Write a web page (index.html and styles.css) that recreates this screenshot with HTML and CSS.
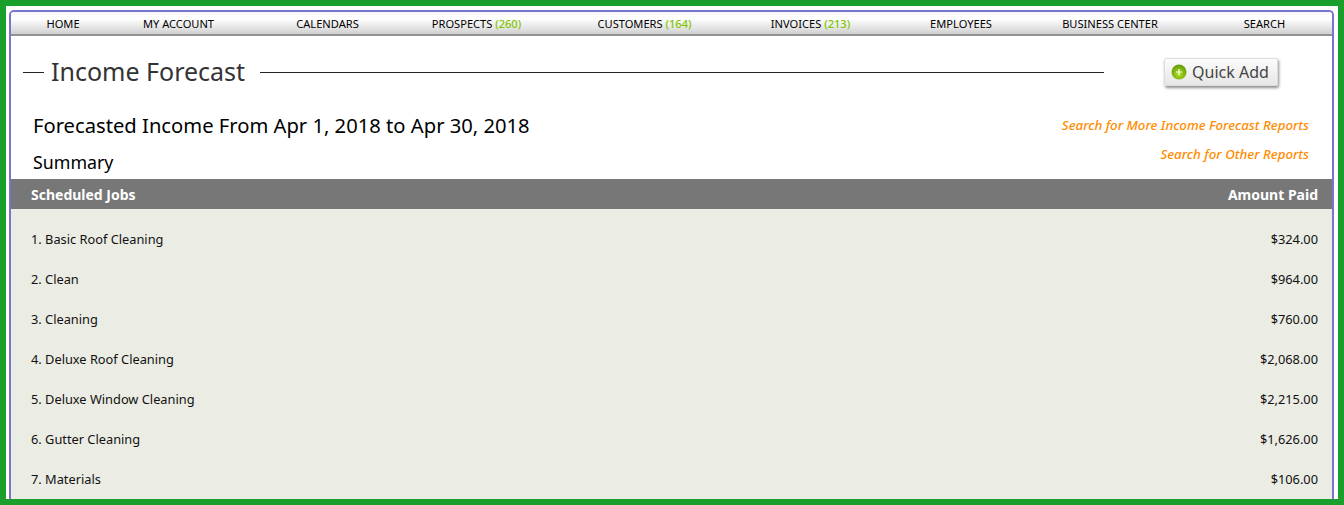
FILE: index.html
```html
<!DOCTYPE html>
<html>
<head>
    <title>Income Forecast</title>
    <link rel="stylesheet" href="styles.css">
</head>
<body>
    <div class="frame">
        <div class="panel">
            <div class="nav">
                <a href="#">HOME</a>
                <a href="#">MY ACCOUNT</a>
                <a href="#">CALENDARS</a>
                <a href="#">PROSPECTS <span class="count">(260)</span></a>
                <a href="#">CUSTOMERS <span class="count">(164)</span></a>
                <a href="#">INVOICES <span class="count">(213)</span></a>
                <a href="#">EMPLOYEES</a>
                <a href="#">BUSINESS CENTER</a>
                <a href="#">SEARCH</a>
            </div>

            <div class="title-row">
                <span class="rule-short"></span>
                <h1>Income Forecast</h1>
                <span class="rule-long"></span>
                <button type="button" class="quick-add">
                    <svg class="plus" width="16" height="16" viewBox="0 0 16 16">
                        <defs>
                            <radialGradient id="plusFill" cx="50%" cy="65%" r="60%">
                                <stop offset="0" stop-color="#b4e020"/>
                                <stop offset="1" stop-color="#659f0a"/>
                            </radialGradient>
                        </defs>
                        <circle cx="8" cy="8" r="7.5" fill="url(#plusFill)"/>
                        <path d="M8 5v6M5 8h6" stroke="#fff" stroke-width="1.2"/>
                    </svg>
                    Quick Add
                </button>
            </div>

            <div class="report-head">
                <div class="report-titles">
                    <h2>Forecasted Income From Apr 1, 2018 to Apr 30, 2018</h2>
                    <h3>Summary</h3>
                </div>
                <div class="report-links">
                    <a href="#">Search for More Income Forecast Reports</a>
                    <a href="#">Search for Other Reports</a>
                </div>
            </div>

            <div class="table-head">
                <span>Scheduled Jobs</span>
                <span>Amount Paid</span>
            </div>
            <div class="table-body">
                <div class="row"><span>1. Basic Roof Cleaning</span><span>$324.00</span></div>
                <div class="row"><span>2. Clean</span><span>$964.00</span></div>
                <div class="row"><span>3. Cleaning</span><span>$760.00</span></div>
                <div class="row"><span>4. Deluxe Roof Cleaning</span><span>$2,068.00</span></div>
                <div class="row"><span>5. Deluxe Window Cleaning</span><span>$2,215.00</span></div>
                <div class="row"><span>6. Gutter Cleaning</span><span>$1,626.00</span></div>
                <div class="row"><span>7. Materials</span><span>$106.00</span></div>
            </div>
        </div>
    </div>
</body>
</html>
```

FILE: styles.css
```css
html, body {
    margin: 0;
    height: 100%;
    overflow: hidden;
}
body {
    font-family: "Noto Sans", Arial, sans-serif;
    color: #111;
    background-color: #fff;
}
.frame {
    box-sizing: border-box;
    height: 505px;
    border: 6px solid #1a9e2c;
    padding: 4px 4px 0 3px;
    overflow: hidden;
}
.panel {
    box-sizing: border-box;
    height: 100%;
    border: 2px solid #7676ce;
    border-bottom: 0;
    border-radius: 5px 5px 0 0;
    overflow: hidden;
}
.nav {
    display: grid;
    grid-template-columns: 44px 187px 111px 187px 149px 183px 118px 180px 129px;
    box-sizing: border-box;
    padding: 1px 0 0 30px;
    height: 24px;
    align-items: center;
    background: linear-gradient(#f8f8f8, #fff 30%, #e2e2e2 75%, #cfcfcf);
    border-bottom: 2px solid #929292;
    white-space: nowrap;
}
.nav a {
    justify-self: center;
    font-size: 11.1px;
    color: #000;
    text-decoration: none;
}
.count {
    font-weight: 500;
    color: #7fc400;
}
.title-row {
    display: flex;
    align-items: center;
    height: 73px;
    padding-left: 12px;
}
.rule-short {
    width: 21px;
    height: 1px;
    background-color: #222;
}
h1 {
    margin: 0 15px 4px 7px;
    font-size: 25px;
    font-weight: normal;
    color: #333;
    white-space: nowrap;
}
.rule-long {
    width: 844px;
    height: 1px;
    background-color: #222;
}
.quick-add {
    display: flex;
    align-items: center;
    gap: 5px;
    box-sizing: border-box;
    width: 114px;
    height: 28px;
    margin: 0 0 2px 60px;
    padding: 0 0 0 6px;
    font-family: inherit;
    font-size: 16px;
    color: #444;
    white-space: nowrap;
    background: linear-gradient(#fcfcfc, #e6e6e6);
    border: 1px solid #ddd;
    border-radius: 2px;
    box-shadow: 1px 2px 3px rgba(0, 0, 0, 0.45);
}
.plus {
    flex: none;
}
.report-head {
    display: flex;
    justify-content: space-between;
    height: 70px;
    padding: 0 23px 0 22px;
}
.report-titles h2 {
    margin: 0;
    padding-top: 2px;
    font-size: 20.2px;
    line-height: 28px;
    font-weight: normal;
    color: #000;
}
.report-titles h3 {
    margin: 0;
    padding-top: 9px;
    font-size: 17.8px;
    line-height: 28px;
    font-weight: normal;
    color: #000;
}
.report-links {
    display: flex;
    flex-direction: column;
    align-items: flex-end;
    gap: 9px;
    padding-top: 6px;
    font-size: 13.3px;
    line-height: 20px;
    font-style: italic;
    font-weight: 500;
}
.report-links a {
    color: #ff8c00;
    text-decoration: none;
}
.table-head {
    display: flex;
    justify-content: space-between;
    align-items: center;
    height: 30px;
    padding: 0 14px 0 20px;
    font-size: 14px;
    font-weight: bold;
    color: #fff;
    background-color: #777;
}
.table-body {
    padding: 10px 14px 0 20px;
    background-color: #ebece4;
    height: 300px;
}
.row {
    display: flex;
    justify-content: space-between;
    align-items: center;
    height: 40px;
    font-size: 12.8px;
    color: #111;
}
```
